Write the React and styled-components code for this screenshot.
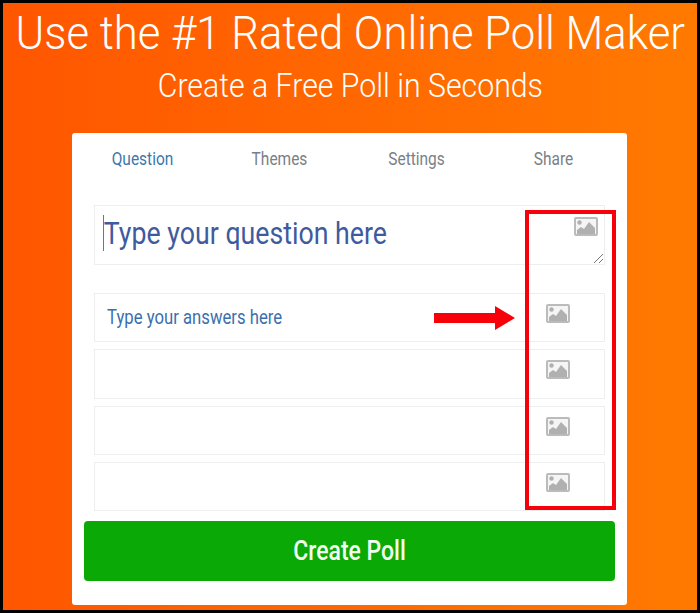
import React from 'react'
import styled, { createGlobalStyle } from 'styled-components'

const GlobalStyle = createGlobalStyle`
    html, body {
        margin: 0;
        padding: 0;
        background: #000;
    }
`

const Page = styled.div`
    box-sizing: border-box;
    width: 700px;
    height: 613px;
    border: 3px solid #000;
    background: linear-gradient(90deg, #ff5600 0%, #ff7a00 100%);
    font-family: Roboto, "Liberation Sans", sans-serif;
    display: flex;
    flex-direction: column;
    align-items: center;
    overflow: hidden;
`

const Title = styled.h1`
    margin: 0;
    height: 61px;
    font-size: 47px;
    line-height: 60px;
    font-weight: 300;
    color: #fff;
    white-space: nowrap;
    transform: scaleX(0.929);
`

const Subtitle = styled.h2`
    margin: 0;
    height: 69px;
    font-size: 34px;
    line-height: 42px;
    font-weight: 300;
    color: #fff;
    white-space: nowrap;
    transform: scaleX(0.89);
`

const Card = styled.div`
    position: relative;
    box-sizing: border-box;
    width: 555px;
    height: 472px;
    margin-right: 1px;
    background: #fff;
    border-radius: 3px;
    padding: 0 12px;
`

const Tabs = styled.div`
    display: grid;
    grid-template-columns: repeat(4, 137px);
    height: 50px;
    margin: 0 -4px 0 -10px;
    align-items: center;
`

const Tab = styled.div`
    font-size: 18px;
    text-align: center;
    color: ${(props) => (props.$active ? '#3a78ae' : '#7a7f85')};
    transform: scaleX(0.86);
`

const Fields = styled.div`
    display: flex;
    flex-direction: column;
    padding: 0 10px;
    margin-top: 22px;
`

const QuestionBox = styled.div`
    position: relative;
    box-sizing: border-box;
    height: 60px;
    border: 1px solid #eceef0;
    display: flex;
    align-items: center;
    justify-content: space-between;
    padding: 0 8px 5px;
    margin-bottom: 28px;
`

const QuestionText = styled.div`
    font-size: 32px;
    color: #3f5ba0;
    border-left: 1.5px solid #3f5ba0;
    line-height: 36px;
    white-space: nowrap;
    transform: scaleX(0.835);
    transform-origin: left center;
`

const AnswerList = styled.div`
    display: flex;
    flex-direction: column;
    gap: 7px;
`

const AnswerRow = styled.div`
    box-sizing: border-box;
    height: 49.3px;
    border: 1px solid #eceef0;
    display: flex;
    align-items: center;
    justify-content: space-between;
    padding: 0 34px 0 12px;
`

const AnswerText = styled.div`
    font-size: 20px;
    margin-bottom: 2px;
    color: #3a6fae;
    white-space: nowrap;
    transform: scaleX(0.835);
    transform-origin: left center;
`

const IconSlot = styled.div`
    line-height: 0;
    margin-bottom: 8px;
`

const QuestionIcon = styled.div`
    position: absolute;
    top: 11px;
    right: 6px;
    line-height: 0;
`

const ResizeHandle = styled.svg`
    position: absolute;
    right: 0;
    bottom: 0;
`

const CreateButton = styled.button`
    display: block;
    width: 531px;
    height: 60px;
    margin-top: 10px;
    padding-bottom: 3px;
    border: 0;
    border-radius: 4px;
    background: #0aa906;
    color: #f2fff0;
    font-family: Roboto, "Liberation Sans", sans-serif;
    font-size: 28px;
    font-weight: 500;
    cursor: pointer;
`

const ButtonLabel = styled.span`
    display: inline-block;
    transform: scaleX(0.82);
`

const Highlight = styled.div`
    position: absolute;
    left: 453px;
    top: 77px;
    box-sizing: border-box;
    width: 91px;
    height: 300px;
    border: 4px solid #f8000a;
    pointer-events: none;
`

const Arrow = styled.svg`
    position: absolute;
    left: 362px;
    top: 172px;
`

const ImageIcon = () => (
    <svg width="24" height="19" viewBox="0 0 24 19">
        <rect x="1" y="1" width="22" height="17" rx="1" fill="#f5f5f5" stroke="#bbb" strokeWidth="2" />
        <circle cx="5.5" cy="5.5" r="2.2" fill="#b0b0b0" />
        <path d="M3 17 L3 13 L7 10 L10 12 L15 5 L21 11 L21 17 Z" fill="#b0b0b0" />
    </svg>
)

const tabs = ['Question', 'Themes', 'Settings', 'Share']
const answers = ['Type your answers here', '', '', '']

export default class App extends React.Component {
    render() {
        return (
            <Page>
                <GlobalStyle />
                <Title>Use the #1 Rated Online Poll Maker</Title>
                <Subtitle>Create a Free Poll in Seconds</Subtitle>
                <Card>
                    <Tabs>
                        {tabs.map((tab, i) => (
                            <Tab key={tab} $active={i === 0}>{tab}</Tab>
                        ))}
                    </Tabs>
                    <Fields>
                        <QuestionBox>
                            <QuestionText>Type your question here</QuestionText>
                            <QuestionIcon><ImageIcon /></QuestionIcon>
                            <ResizeHandle width="12" height="12" viewBox="0 0 12 12">
                                <path d="M2 11 L11 2 M7 11 L11 7" stroke="#777" strokeWidth="1" />
                            </ResizeHandle>
                        </QuestionBox>
                        <AnswerList>
                            {answers.map((answer, i) => (
                                <AnswerRow key={i}>
                                    <AnswerText>{answer}</AnswerText>
                                    <IconSlot><ImageIcon /></IconSlot>
                                </AnswerRow>
                            ))}
                        </AnswerList>
                    </Fields>
                    <CreateButton><ButtonLabel>Create Poll</ButtonLabel></CreateButton>
                    <Highlight />
                    <Arrow width="82" height="26" viewBox="0 0 82 26">
                        <path d="M0 8 H61 V1 L81 13 L61 25 V18 H0 Z" fill="#f8000a" />
                    </Arrow>
                </Card>
            </Page>
        )
    }
}
